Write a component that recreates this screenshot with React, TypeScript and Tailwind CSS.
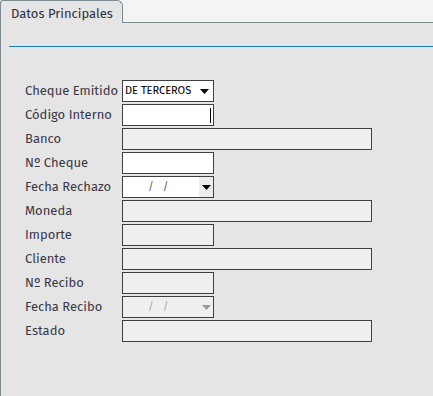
import React from 'react';

type Field = {
  label: string;
  kind: 'select' | 'text' | 'date';
  wide?: boolean;
  enabled?: boolean;
  value?: string;
  focused?: boolean;
};

const fields: Field[] = [
  { label: 'Cheque Emitido', kind: 'select', enabled: true, value: 'DE TERCEROS' },
  { label: 'Código Interno', kind: 'text', enabled: true, focused: true },
  { label: 'Banco', kind: 'text', wide: true },
  { label: 'Nº Cheque', kind: 'text', enabled: true },
  { label: 'Fecha Rechazo', kind: 'date', enabled: true },
  { label: 'Moneda', kind: 'text', wide: true },
  { label: 'Importe', kind: 'text' },
  { label: 'Cliente', kind: 'text', wide: true },
  { label: 'Nº Recibo', kind: 'text' },
  { label: 'Fecha Recibo', kind: 'date' },
  { label: 'Estado', kind: 'text', wide: true },
];

const Arrow = ({ disabled }: { disabled?: boolean }) => (
  <svg width="9" height="5" viewBox="0 0 9 5">
    <path d="M0 0h9L4.5 5z" fill={disabled ? '#9a9a9a' : '#000'} />
  </svg>
);

const FieldBox = ({ f }: { f: Field }) => {
  const base = `h-[22px] border border-[#3f3f3f] flex items-center ${f.enabled ? 'bg-white' : 'bg-[#efefef]'} ${f.wide ? 'w-[250px]' : 'w-[92px]'}`;

  if (f.kind === 'select') {
    return (
      <div className={`${base} justify-between pl-[2px] pr-[4px]`}>
        <span className="text-[11px] text-black">{f.value}</span>
        <Arrow />
      </div>
    );
  }

  if (f.kind === 'date') {
    const slash = f.enabled ? 'text-[#5a5a7a]' : 'text-[#b0a8a8]';
    return (
      <div className={`${base} justify-between`}>
        <span className={`pl-[25px] text-[11px] ${slash}`}>
          /<span className="ml-[9px]">/</span>
        </span>
        <span className={`h-full w-[14px] flex items-center justify-center ${f.enabled ? 'bg-[#ececec]' : ''}`}>
          <Arrow disabled={!f.enabled} />
        </span>
      </div>
    );
  }

  return (
    <div className={`${base} justify-end pr-[2px]`}>
      {f.focused && <span className="w-px h-[15px] bg-black" />}
    </div>
  );
};

export default function App() {
  return (
    <div
      className="w-[433px] h-[396px] bg-[#f4f4f4] flex flex-col overflow-hidden"
      style={{ fontFamily: '"Fira Sans", Lato, "Noto Sans", sans-serif' }}
    >
      <div className="flex h-[23px]">
        <div className="w-[123px] bg-[#e5e5e5] border-l border-t border-r border-[#7d8b90] rounded-tr-[6px] rounded-tl-[3px] pl-[10px] pt-[3px] text-[13px] text-[#2e2e3e]">
          Datos Principales
        </div>
        <div className="flex-1 border-b border-[#7d8b90]" />
      </div>

      <div className="flex-1 bg-[#e5e5e5] border-l border-[#7d8b90] pt-[23px]">
        <div className="ml-[8px] h-px bg-[#1a78c6]" />

        <div className="mt-[33px] pl-[24px] flex flex-col gap-[2px]">
          {fields.map((f) => (
            <div key={f.label} className="flex items-center">
              <div className="w-[97px] text-[13px] text-[#3a3848]">{f.label}</div>
              <FieldBox f={f} />
            </div>
          ))}
        </div>
      </div>
    </div>
  );
}
